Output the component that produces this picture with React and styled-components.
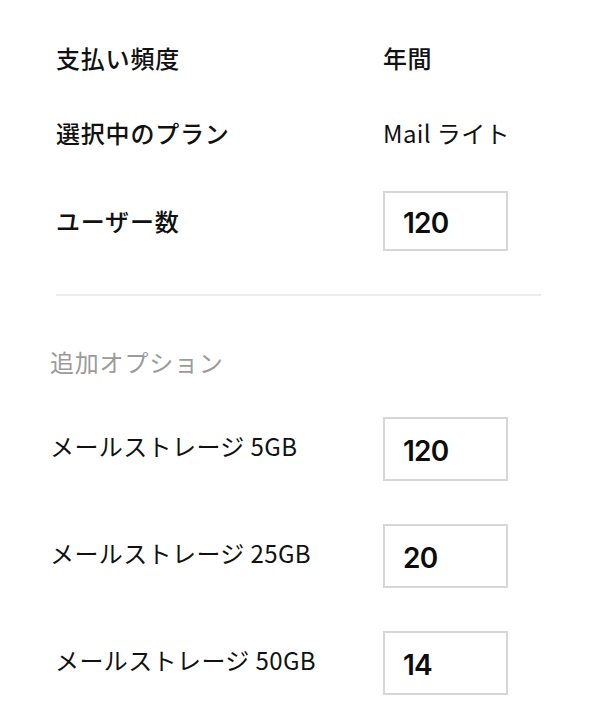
import React from 'react';
import styled, { createGlobalStyle } from 'styled-components';

const GlobalStyle = createGlobalStyle`
    html, body {
        margin: 0;
        padding: 0;
        background: #ffffff;
    }
    body {
        font-family: 'Noto Sans CJK JP', 'Noto Sans', sans-serif;
        color: #111111;
    }
`;

const plan = [
    { label: '支払い頻度', value: '年間', strong: true, height: 75 },
    { label: '選択中のプラン', value: 'Mail ライト', strong: false, height: 75 },
];

const storage = [
    { label: 'メールストレージ 5GB', qty: 120, indent: 0 },
    { label: 'メールストレージ 25GB', qty: 20, indent: 0 },
    { label: 'メールストレージ 50GB', qty: 14, indent: 5 },
];

export default function App() {
    return (
        <>
            <GlobalStyle />
            <Page>
                <Section>
                    {plan.map((row) => (
                        <Row key={row.label} $height={row.height}>
                            <Label>{row.label}</Label>
                            <Value $strong={row.strong}>{row.value}</Value>
                        </Row>
                    ))}
                    <Row $height={102}>
                        <Label>ユーザー数</Label>
                        <QtyBox>120</QtyBox>
                    </Row>
                </Section>

                <Divider />

                <OptionsTitle>追加オプション</OptionsTitle>

                <Options>
                    {storage.map((item) => (
                        <OptionRow key={item.label}>
                            <OptionLabel $indent={item.indent}>{item.label}</OptionLabel>
                            <QtyBox $tall>{item.qty}</QtyBox>
                        </OptionRow>
                    ))}
                </Options>
            </Page>
        </>
    );
}

const medium = `'Noto Sans CJK JP Medium', 'Noto Sans CJK JP', 'Noto Sans', sans-serif`;

const Page = styled.div`
    width: 601px;
    height: 720px;
    box-sizing: border-box;
    padding: 20px 0 0 56px;
    overflow: hidden;
`;

const Section = styled.div`
    display: flex;
    flex-direction: column;
`;

const Row = styled.div`
    display: grid;
    grid-template-columns: 327px 1fr;
    align-items: center;
    height: ${(p) => p.$height}px;
`;

const Label = styled.div`
    font-family: ${medium};
    font-size: 24px;
    font-weight: 400;
    letter-spacing: 0.8px;
    line-height: 1;
`;

const Value = styled.div`
    font-family: ${(p) => (p.$strong ? medium : `'Noto Sans CJK JP', sans-serif`)};
    font-size: 24px;
    font-weight: 400;
    letter-spacing: 0.4px;
    line-height: 1;
`;

const QtyBox = styled.div`
    box-sizing: border-box;
    width: 125px;
    height: ${(p) => (p.$tall ? 64 : 60)}px;
    border: 2px solid #d6d6d6;
    display: flex;
    align-items: center;
    padding: 4px 0 0 18px;
    font-family: Inter, 'Noto Sans', sans-serif;
    font-size: 28px;
    font-weight: 600;
    letter-spacing: -0.8px;
    color: #0d0d0d;
`;

const Divider = styled.div`
    width: 485px;
    height: 2px;
    background: #ececec;
    margin-top: 22px;
`;

const OptionsTitle = styled.div`
    margin: 54px 0 0 -6px;
    font-size: 24px;
    font-weight: 400;
    letter-spacing: 0.8px;
    color: #9b9b9b;
    line-height: 1;
`;

const Options = styled.div`
    display: flex;
    flex-direction: column;
    gap: 43px;
    margin-top: 43px;
`;

const OptionRow = styled.div`
    display: grid;
    grid-template-columns: 327px 1fr;
    align-items: center;
`;

const OptionLabel = styled.div`
    margin-left: ${(p) => p.$indent - 6}px;
    margin-top: -6px;
    font-size: 24px;
    font-weight: 400;
    letter-spacing: 0.4px;
    line-height: 1;
`;
